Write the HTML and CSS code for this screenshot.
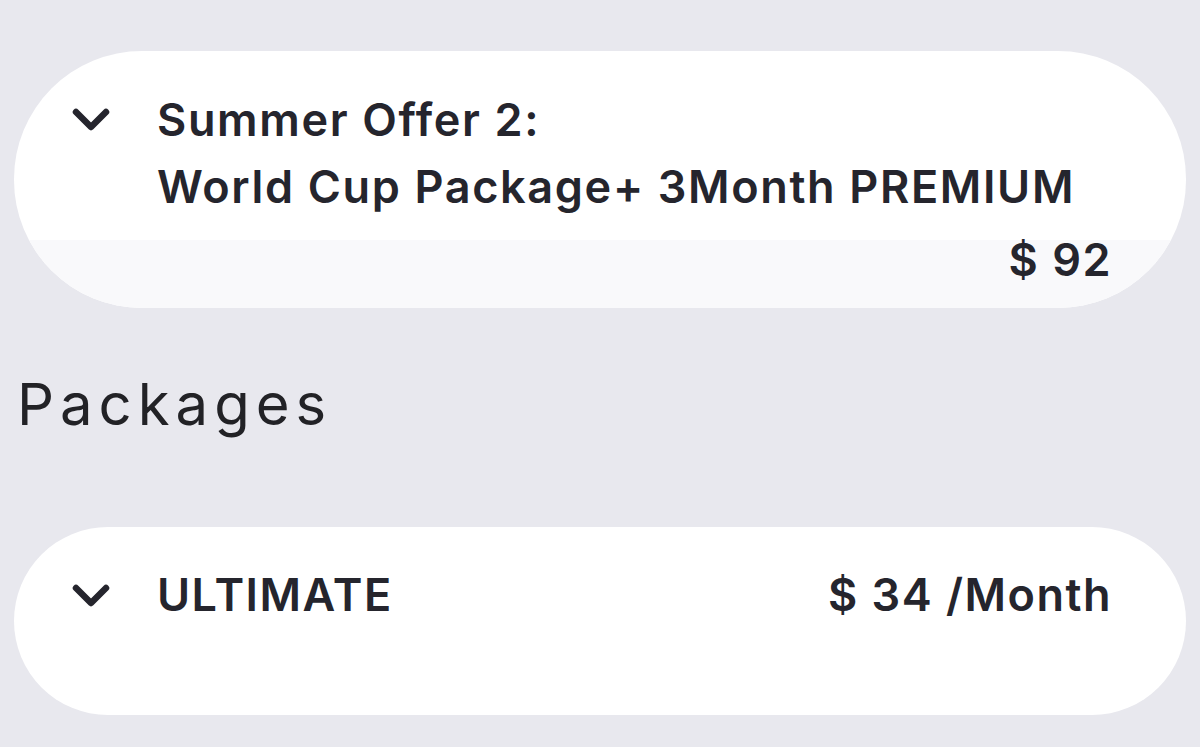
FILE: index.html
```html
<!DOCTYPE html>
<html>
<head>
<meta charset="utf-8">
<link rel="stylesheet" href="styles.css">
</head>
<body>
<main class="page">
  <section class="card offer">
    <div class="offer-head">
      <svg class="chev" viewBox="0 0 38 24" width="38" height="24"><path d="M4 4 L19 19 L34 4" fill="none" stroke="#25252d" stroke-width="6.5" stroke-linecap="round" stroke-linejoin="round"/></svg>
      <div class="title">Summer Offer 2:<br>World Cup Package+ 3Month PREMIUM</div>
    </div>
    <div class="offer-price">$ 92</div>
  </section>
  <h2 class="section-title">Packages</h2>
  <section class="card pkg">
    <div class="pkg-row">
      <svg class="chev" viewBox="0 0 38 24" width="38" height="24"><path d="M4 4 L19 19 L34 4" fill="none" stroke="#25252d" stroke-width="6.5" stroke-linecap="round" stroke-linejoin="round"/></svg>
      <div class="pkg-name">ULTIMATE</div>
      <div class="pkg-price">$ 34 /Month</div>
    </div>
  </section>
</main>
</body>
</html>
```
FILE: styles.css
```css
html, body { margin: 0; padding: 0; }
body {
  background: #e8e8ee;
  font-family: "Inter", "Liberation Sans", sans-serif;
  color: #25252d;
  width: 1200px;
  height: 747px;
  overflow: hidden;
}
.page { padding: 51px 14px 0 14px; }
.card {
  background: #fff;
  overflow: hidden;
}
.offer { border-radius: 128px; height: 257px; display: flex; flex-direction: column; }
.offer-head {
  height: 189px;
  display: flex;
  align-items: flex-start;
  padding: 0 0 0 58px;
  box-sizing: border-box;
}
.chev { flex: none; margin-top: 57px; }
.title {
  margin-left: 47px;
  margin-top: 35px;
  font-size: 45px;
  font-weight: 600;
  line-height: 67px;
  letter-spacing: 1.65px;
}
.offer-price {
  flex: 1;
  background: #f9f9fb;
  text-align: right;
  padding-right: 74px;
  font-size: 45px;
  font-weight: 600;
  line-height: 40px;
  letter-spacing: 1.5px;
}
.section-title {
  margin: 0;
  padding: 61px 0 0 3px;
  height: 219px;
  box-sizing: border-box;
  font-size: 58px;
  font-weight: 400;
  line-height: 70px;
  color: #222226;
  letter-spacing: 6px;
}
.pkg { border-radius: 94px; height: 188px; }
.pkg-row {
  display: flex;
  align-items: flex-start;
  padding: 0 74px 0 58px;
}
.pkg-row .chev { margin-top: 57px; }
.pkg-name, .pkg-price {
  margin-top: 34px;
  font-size: 45px;
  font-weight: 600;
  line-height: 67px;
  letter-spacing: 1.5px;
}
.pkg-name { margin-left: 47px; }
.pkg-price { margin-left: auto; }
```
